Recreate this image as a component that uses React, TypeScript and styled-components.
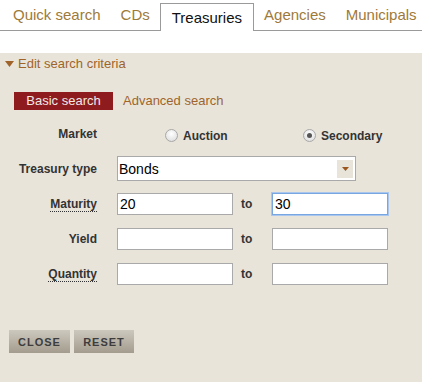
import { useEffect, useRef } from 'react'
import styled, { createGlobalStyle } from 'styled-components'

const GlobalStyle = createGlobalStyle`
  html, body {
    margin: 0;
    padding: 0;
    background: #ffffff;
    font-family: 'Liberation Sans', Arial, sans-serif;
  }
  * { box-sizing: border-box; }
`

const Page = styled.div`
  width: 422px;
  min-height: 382px;
  display: flex;
  flex-direction: column;
`

const TabBar = styled.div`
  display: flex;
  align-items: flex-start;
  height: 31px;
  padding-left: 3px;
  border-bottom: 1px solid #9a9a9a;
`

const Tab = styled.div<{ $active?: boolean }>`
  font-size: 15px;
  white-space: nowrap;
  padding: 0 10px;
  line-height: 30px;
  color: #9e7a3a;
  ${(p) =>
    p.$active &&
    `
    color: #111;
    background: #fff;
    margin-top: 3px;
    height: 28px;
    padding: 0 11px;
    line-height: 27px;
    border: 1px solid #9a9a9a;
    border-bottom: none;
  `}
`

const Panel = styled.div`
  margin-top: 22px;
  flex: 1;
  background: #e8e4da;
  padding: 3px 0 0;
`

const Toggle = styled.div`
  display: flex;
  align-items: center;
  gap: 4px;
  padding-left: 5px;
  font-size: 13px;
  line-height: 16px;
  color: #a0642a;
`

const SearchTabs = styled.div`
  display: flex;
  align-items: center;
  gap: 10px;
  margin: 20px 0 0 14px;
`

const SearchTab = styled.div<{ $active?: boolean }>`
  font-size: 13px;
  height: 18px;
  line-height: 18px;
  padding: 0 ${(p) => (p.$active ? '12px' : '0')};
  min-width: ${(p) => (p.$active ? '99px' : '0')};
  text-align: center;
  color: ${(p) => (p.$active ? '#f1e9e6' : '#a0642a')};
  background: ${(p) => (p.$active ? '#8e1b1e' : 'transparent')};
`

const Form = styled.div`
  margin-top: 15px;
  display: flex;
  flex-direction: column;
`

const Row = styled.div<{ $h: number; $gap: number }>`
  display: grid;
  grid-template-columns: 117px 116px 39px 116px;
  align-items: center;
  height: ${(p) => p.$h}px;
  margin-bottom: ${(p) => p.$gap}px;
`

const Label = styled.div`
  justify-self: end;
  margin-right: 20px;
  font-size: 12px;
  font-weight: bold;
  color: #333;
`

const AbbrLabel = styled(Label)`
  border-bottom: 1px dotted #333;
  line-height: 14px;
`

const RadioGroup = styled.label<{ $pad: number }>`
  display: flex;
  align-items: center;
  gap: 5px;
  padding-left: ${(p) => p.$pad}px;
  padding-top: 3px;
  font-size: 12px;
  font-weight: bold;
  color: #333;
  white-space: nowrap;
`

const Radio = styled.input`
  appearance: none;
  margin: 0;
  width: 13px;
  height: 13px;
  border-radius: 50%;
  border: 1px solid #a8a8a8;
  background: radial-gradient(circle at 50% 35%, #ffffff 0%, #e4e4e4 70%, #cfcfcf 100%);
  position: relative;
  &:checked::after {
    content: '';
    position: absolute;
    left: 3px;
    top: 3px;
    width: 5px;
    height: 5px;
    border-radius: 50%;
    background: #555;
  }
`

const To = styled.div`
  padding-left: 8px;
  font-size: 12px;
  font-weight: bold;
  color: #333;
`

const TextInput = styled.input<{ $focus?: boolean }>`
  width: 116px;
  height: 22px;
  margin: 0;
  padding: 0 2px;
  font-family: 'Liberation Sans', Arial, sans-serif;
  font-size: 14px;
  color: #000;
  background: #fff;
  border: 1px solid ${(p) => (p.$focus ? '#78a6e0' : '#a9a9a9')};
  box-shadow: ${(p) => (p.$focus ? '0 0 0 1px #a9c7ee' : 'none')};
  outline: none;
  caret-color: #000;
`

const Select = styled.div`
  grid-column: 2 / span 3;
  width: 239px;
  height: 25px;
  display: flex;
  align-items: center;
  justify-content: space-between;
  padding: 0 2px 0 1px;
  background: #fff;
  border: 1px solid #a9a9a9;
  font-size: 14px;
  color: #000;
`

const SelectArrow = styled.div`
  width: 16px;
  height: 18px;
  background: #e8e4da;
  display: flex;
  align-items: center;
  justify-content: center;
`

const Buttons = styled.div`
  display: flex;
  gap: 4px;
  margin: 45px 0 0 9px;
`

const Button = styled.button<{ $w: number }>`
  width: ${(p) => p.$w}px;
  height: 23px;
  border: none;
  padding: 0;
  font-family: 'Liberation Sans', Arial, sans-serif;
  font-size: 11px;
  font-weight: bold;
  letter-spacing: 1px;
  color: #3d3d3d;
  background: linear-gradient(#cdc8be, #a39c8e);
`

function Triangle({ color, w, h }: { color: string; w: number; h: number }) {
  return (
    <svg width={w} height={h} viewBox={`0 0 ${w} ${h}`}>
      <polygon points={`0,0 ${w},0 ${w / 2},${h}`} fill={color} />
    </svg>
  )
}

export default function App() {
  const toRef = useRef<HTMLInputElement>(null)

  useEffect(() => {
    const el = toRef.current
    if (el) {
      el.focus()
      el.setSelectionRange(2, 2)
    }
  }, [])

  return (
    <Page>
      <GlobalStyle />
      <TabBar>
        <Tab>Quick search</Tab>
        <Tab>CDs</Tab>
        <Tab $active>Treasuries</Tab>
        <Tab>Agencies</Tab>
        <Tab>Municipals</Tab>
      </TabBar>
      <Panel>
        <Toggle>
          <Triangle color="#a0642a" w={9} h={6} />
          Edit search criteria
        </Toggle>
        <SearchTabs>
          <SearchTab $active>Basic search</SearchTab>
          <SearchTab>Advanced search</SearchTab>
        </SearchTabs>
        <Form>
          <Row $h={18} $gap={13}>
            <Label>Market</Label>
            <RadioGroup $pad={48}>
              <Radio type="radio" name="market" />
              Auction
            </RadioGroup>
            <span />
            <RadioGroup $pad={31}>
              <Radio type="radio" name="market" defaultChecked />
              Secondary
            </RadioGroup>
          </Row>
          <Row $h={25} $gap={12}>
            <Label>Treasury type</Label>
            <Select>
              Bonds
              <SelectArrow>
                <Triangle color="#9a561c" w={7} h={4} />
              </SelectArrow>
            </Select>
          </Row>
          <Row $h={22} $gap={13}>
            <AbbrLabel>Maturity</AbbrLabel>
            <TextInput defaultValue="20" />
            <To>to</To>
            <TextInput ref={toRef} defaultValue="30" $focus />
          </Row>
          <Row $h={22} $gap={13}>
            <Label>Yield</Label>
            <TextInput />
            <To>to</To>
            <TextInput />
          </Row>
          <Row $h={22} $gap={0}>
            <AbbrLabel>Quantity</AbbrLabel>
            <TextInput />
            <To>to</To>
            <TextInput />
          </Row>
        </Form>
        <Buttons>
          <Button $w={61}>CLOSE</Button>
          <Button $w={60}>RESET</Button>
        </Buttons>
      </Panel>
    </Page>
  )
}
